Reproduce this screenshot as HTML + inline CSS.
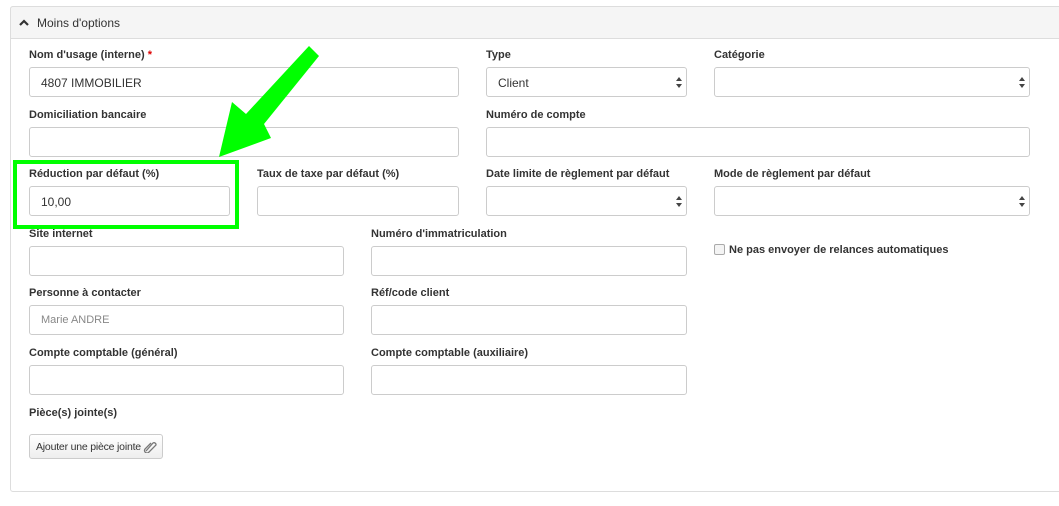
<!DOCTYPE html>
<html><head><meta charset="utf-8"><style>
body{margin:0;width:1059px;height:506px;background:#fff;font-family:"Liberation Sans",Arial,sans-serif;position:relative;overflow:hidden}
.panel{position:absolute;left:10px;top:6px;width:1060px;height:484px;border:1px solid #ddd;border-radius:3px}
.hdr{position:absolute;left:10px;top:6px;width:1060px;height:31px;background:#f5f5f5;border:1px solid #ddd;border-radius:3px 3px 0 0;font-size:12px;color:#333}
.hdr span{position:absolute;left:26px;top:9px}
.lab{position:absolute;font-size:11px;font-weight:bold;color:#333}
.in{position:absolute;box-sizing:border-box;border:1px solid #ccc;border-radius:3px;height:30px;background:#fff;font-size:12px;color:#333;padding:8px 11px}
.sel:after{content:"";position:absolute;right:4px;top:9px;border:3px solid transparent;border-bottom:4px solid #444;border-top:0}
.sel:before{content:"";position:absolute;right:4px;top:16px;border:3px solid transparent;border-top:4px solid #444;border-bottom:0}
</style></head><body>
<div class="panel"></div>
<div class="hdr"><svg style="position:absolute;left:8px;top:12px" width="10" height="7"><path d="M1 6 L5 2 L9 6" stroke="#333" stroke-width="2.2" fill="none"/></svg><span>Moins d'options</span></div>

<div class="lab" style="left:29px;top:49px">Nom d'usage (interne) <span style="color:#d00">*</span></div>
<div class="in" style="left:29px;top:67px;width:430px">4807 IMMOBILIER</div>
<div class="lab" style="left:486px;top:49px">Type</div>
<div class="in sel" style="left:486px;top:67px;width:201px">Client</div>
<div class="lab" style="left:714px;top:49px">Catégorie</div>
<div class="in sel" style="left:714px;top:67px;width:316px"></div>

<div class="lab" style="left:29px;top:109px">Domiciliation bancaire</div>
<div class="in" style="left:29px;top:127px;width:430px"></div>
<div class="lab" style="left:486px;top:109px">Numéro de compte</div>
<div class="in" style="left:486px;top:127px;width:544px"></div>

<div class="lab" style="left:29px;top:168px">Réduction par défaut (%)</div>
<div class="in" style="left:29px;top:186px;width:201px">10,00</div>
<div class="lab" style="left:257px;top:168px">Taux de taxe par défaut (%)</div>
<div class="in" style="left:257px;top:186px;width:202px"></div>
<div class="lab" style="left:486px;top:168px">Date limite de règlement par défaut</div>
<div class="in sel" style="left:486px;top:186px;width:201px"></div>
<div class="lab" style="left:714px;top:168px">Mode de règlement par défaut</div>
<div class="in sel" style="left:714px;top:186px;width:316px"></div>

<div style="position:absolute;left:13px;top:160px;width:218px;height:61px;border:4px solid #00ff00"></div>

<div class="lab" style="left:29px;top:228px">Site internet</div>
<div class="in" style="left:29px;top:246px;width:315px"></div>
<div class="lab" style="left:371px;top:228px">Numéro d'immatriculation</div>
<div class="in" style="left:371px;top:246px;width:316px"></div>
<div style="position:absolute;left:714px;top:244px;width:9px;height:9px;border:1px solid #aaa;border-radius:2px;background:#f4f4f4"></div>
<div class="lab" style="left:729px;top:244px">Ne pas envoyer de relances automatiques</div>

<div class="lab" style="left:29px;top:287px">Personne à contacter</div>
<div class="in" style="left:29px;top:305px;width:315px;color:#888;font-size:11px">Marie ANDRE</div>
<div class="lab" style="left:371px;top:287px">Réf/code client</div>
<div class="in" style="left:371px;top:305px;width:316px"></div>

<div class="lab" style="left:29px;top:347px">Compte comptable (général)</div>
<div class="in" style="left:29px;top:365px;width:315px"></div>
<div class="lab" style="left:371px;top:347px">Compte comptable (auxiliaire)</div>
<div class="in" style="left:371px;top:365px;width:316px"></div>

<div class="lab" style="left:29px;top:407px">Pièce(s) jointe(s)</div>
<div style="position:absolute;left:29px;top:434px;width:134px;height:25px;box-sizing:border-box;border:1px solid #ccc;border-radius:3px;background:linear-gradient(#fff,#eee);font-size:10.5px;color:#333;padding:6px 0 0 6px;white-space:nowrap;letter-spacing:-0.2px">Ajouter une pièce jointe<svg width="14" height="13" style="position:absolute;right:5px;top:5px"><path d="M3 11 L10 3 A2 2 0 0 1 13 5 L6 12 A2 2 0 0 1 2 9 L8 3" stroke="#777" stroke-width="1.3" fill="none"/></svg></div>

<svg style="position:absolute;left:0;top:0" width="400" height="240"><polygon points="309,46 319,56 264,124 271,138 219,157 232,102 246,114" fill="#00ff00"/></svg>
</body></html>
